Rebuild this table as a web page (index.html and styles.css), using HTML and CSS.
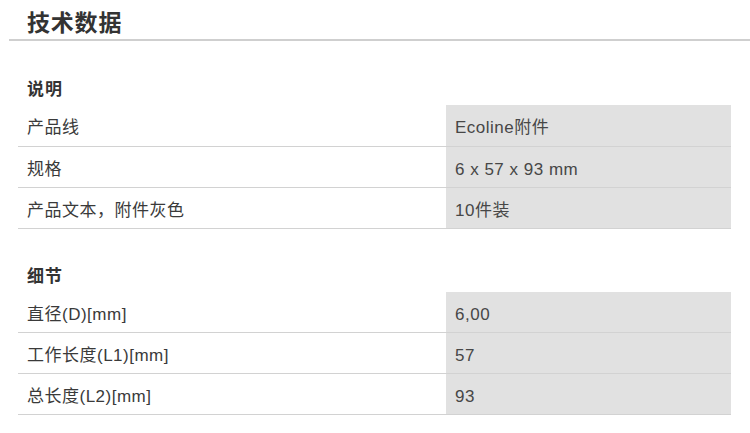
FILE: index.html
```html
<!DOCTYPE html>
<html lang="zh">
<head>
<meta charset="utf-8">
<link rel="stylesheet" href="styles.css">
</head>
<body>
<div class="page">
  <h1 class="title">技术数据</h1>
  <section class="group first">
    <h2 class="group-title">说明</h2>
    <table class="spec">
      <tr><td class="label">产品线</td><td class="value">Ecoline附件</td></tr>
      <tr><td class="label">规格</td><td class="value">6 x 57 x 93 mm</td></tr>
      <tr><td class="label">产品文本，附件灰色</td><td class="value">10件装</td></tr>
    </table>
  </section>
  <section class="group">
    <h2 class="group-title">细节</h2>
    <table class="spec">
      <tr><td class="label">直径(D)[mm]</td><td class="value">6,00</td></tr>
      <tr><td class="label">工作长度(L1)[mm]</td><td class="value">57</td></tr>
      <tr><td class="label">总长度(L2)[mm]</td><td class="value">93</td></tr>
    </table>
  </section>
</div>
</body>
</html>
```
FILE: styles.css
```css
html, body {
  margin: 0;
  padding: 0;
  background: #fff;
}
body {
  font-family: "Liberation Sans", "Noto Sans CJK SC", sans-serif;
  color: #333;
}
.page {
  width: 750px;
}
.title {
  margin: 0 0 0 9px;
  padding: 9px 0 1px 18px;
  font-size: 23px;
  line-height: 29px;
  font-weight: bold;
  color: #333;
  letter-spacing: 0.8px;
  border-bottom: 2px solid #cfcfcf;
}
.group {
  margin: 0 19px 0 18px;
}
.group.first {
  padding-top: 37px;
}
.group + .group {
  padding-top: 36px;
}
.group-title {
  margin: 0;
  padding-left: 9px;
  font-size: 17px;
  line-height: 24px;
  font-weight: bold;
  color: #333;
  letter-spacing: 1px;
  height: 27px;
}
.spec {
  width: 100%;
  border-collapse: collapse;
}
.spec tr {
  height: 41px;
}
.spec td {
  height: 41px;
  padding: 6px 8px 0 9px;
  box-sizing: border-box;
  font-size: 17px;
  line-height: 20px;
  letter-spacing: 0.5px;
  border-bottom: 1px solid #d2d2d2;
  vertical-align: middle;
}
.spec .label {
  width: 428px;
  color: #3a3a3a;
}
.spec .value {
  background: #e1e1e1;
  color: #474747;
}
```
